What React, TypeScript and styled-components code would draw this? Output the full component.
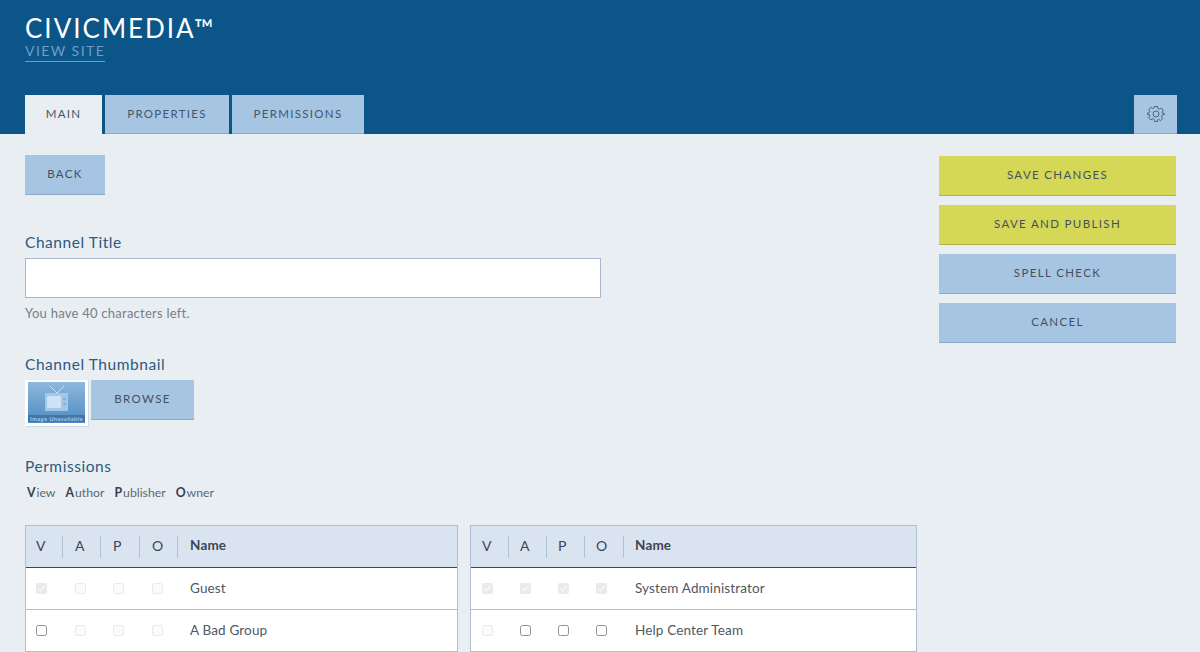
import styled, { createGlobalStyle } from "styled-components";

const GlobalStyle = createGlobalStyle`
    html, body {
        height: 100%;
        margin: 0;
        overflow: hidden;
    }

    body {
        background: #e9eef2;
        font-family: "Lato", "Noto Sans", sans-serif;
        color: #33495c;
    }
`;

type Access = "checked" | "locked" | "lockedChecked" | "open";

type TableData = {
    columns: string;
    lead: number;
    pad: number;
    rows: { name: string; access: Access[] }[];
};

const tables: TableData[] = [
    {
        columns: "37px 38px 39px 38px 1fr",
        lead: 10,
        pad: 12,
        rows: [
            { name: "Guest", access: ["lockedChecked", "locked", "locked", "locked"] },
            { name: "A Bad Group", access: ["open", "locked", "locked", "locked"] },
        ],
    },
    {
        columns: "38px 38px 38px 39px 1fr",
        lead: 11,
        pad: 11,
        rows: [
            {
                name: "System Administrator",
                access: ["lockedChecked", "lockedChecked", "lockedChecked", "lockedChecked"],
            },
            { name: "Help Center Team", access: ["locked", "open", "open", "open"] },
        ],
    },
];

const legend = [
    ["V", "iew"],
    ["A", "uthor"],
    ["P", "ublisher"],
    ["O", "wner"],
];

const GearIcon = () => (
    <svg width="18" height="18" viewBox="0 0 24 24" fill="none" stroke="#4c5f75" strokeWidth="1.3" strokeLinejoin="round">
        <path d="M10 2h4l.6 2.9 1.9.8 2.5-1.6 2.8 2.8-1.6 2.5.8 1.9L23 11v2l-2.9.7-.8 1.9 1.6 2.5-2.8 2.8-2.5-1.6-1.9.8L14 22h-4l-.6-2.9-1.9-.8-2.5 1.6-2.8-2.8 1.6-2.5-.8-1.9L0 13v-2l3-.7.8-1.9-1.6-2.5L5 3.1l2.5 1.6 1.9-.8z" />
        <circle cx="12" cy="12" r="4" />
    </svg>
);

const Unavailable = () => (
    <svg width="57" height="41" viewBox="0 0 57 41">
        <defs>
            <linearGradient id="sky" x1="0" y1="0" x2="0" y2="1">
                <stop offset="0" stopColor="#8fb8de" />
                <stop offset="1" stopColor="#4f8bc2" />
            </linearGradient>
        </defs>
        <rect width="57" height="41" fill="url(#sky)" />
        <path d="M22 4l7 7 7-7" fill="none" stroke="#c9dff2" strokeWidth="1" />
        <rect x="17" y="11" width="23" height="18" rx="1" fill="#a3c7e6" />
        <rect x="19" y="14" width="14" height="12" rx="1" fill="#cfe3f4" />
        <circle cx="36.5" cy="17" r="1.4" fill="#7fb0da" />
        <circle cx="36.5" cy="22" r="1.4" fill="#7fb0da" />
        <rect y="33" width="57" height="7" fill="#3f77ab" />
        <text x="28.5" y="38.8" fontSize="5.8" fontWeight="700" textAnchor="middle" fill="#a9c8e3" fontFamily="Lato, sans-serif" letterSpacing="0.35">
            Image Unavailable
        </text>
    </svg>
);

const App = () => {
    return (
        <>
            <GlobalStyle />
            <Header>
                <div>
                    <Brand>CIVICMEDIA™</Brand>
                    <ViewSite href="#">VIEW SITE</ViewSite>
                </div>
                <TabBar>
                    <Tabs>
                        <Tab $active $width={77}>MAIN</Tab>
                        <Tab $width={124}>PROPERTIES</Tab>
                        <Tab $width={132}>PERMISSIONS</Tab>
                    </Tabs>
                    <SettingsTab aria-label="Settings">
                        <GearIcon />
                    </SettingsTab>
                </TabBar>
            </Header>
            <Main>
                <Form>
                    <Button $width={80}>BACK</Button>
                    <TitleField>
                        <Label>Channel Title</Label>
                        <TextInput type="text" />
                        <Hint>You have 40 characters left.</Hint>
                    </TitleField>
                    <ThumbnailField>
                        <Label>Channel Thumbnail</Label>
                        <ThumbnailRow>
                            <Thumbnail>
                                <Unavailable />
                            </Thumbnail>
                            <Button $width={103}>BROWSE</Button>
                        </ThumbnailRow>
                    </ThumbnailField>
                    <PermissionsField>
                        <Label>Permissions</Label>
                        <Legend>
                            {legend.map(([key, rest]) => (
                                <span key={key}>
                                    <LegendKey>{key}</LegendKey>
                                    {rest}
                                </span>
                            ))}
                        </Legend>
                    </PermissionsField>
                    <Tables>
                        {tables.map(({ columns, lead, pad, rows }) => (
                            <Table key={columns}>
                                <HeadRow $columns={columns} $lead={lead} $pad={pad}>
                                    <HeadCell>V</HeadCell>
                                    <HeadCell>A</HeadCell>
                                    <HeadCell>P</HeadCell>
                                    <HeadCell>O</HeadCell>
                                    <NameHead>Name</NameHead>
                                </HeadRow>
                                {rows.map(({ name, access }) => (
                                    <Row key={name} $columns={columns} $lead={lead} $pad={pad}>
                                        {access.map((state, idx) => (
                                            <Cell key={idx}>
                                                <Check
                                                    type="checkbox"
                                                    disabled={state === "locked" || state === "lockedChecked"}
                                                    defaultChecked={state === "lockedChecked" || state === "checked"}
                                                />
                                            </Cell>
                                        ))}
                                        <NameCell>{name}</NameCell>
                                    </Row>
                                ))}
                            </Table>
                        ))}
                    </Tables>
                </Form>
                <Actions>
                    <Button $accent>SAVE CHANGES</Button>
                    <Button $accent>SAVE AND PUBLISH</Button>
                    <Button>SPELL CHECK</Button>
                    <Button>CANCEL</Button>
                </Actions>
            </Main>
        </>
    );
};

const Header = styled.header`
    display: flex;
    flex-direction: column;
    justify-content: space-between;

    height: 134px;

    padding: 14px 23px 0 25px;

    box-sizing: border-box;
    background: #0b5588;
`;

const Brand = styled.div`
    font-size: 26px;
    line-height: 28px;
    letter-spacing: 2px;
    color: #fff;
`;

const ViewSite = styled.a`
    display: block;

    width: fit-content;

    padding-bottom: 1px;

    font-size: 14px;
    line-height: 18px;
    letter-spacing: 1.45px;
    color: #6f9dc4;
    text-decoration: none;

    border-bottom: 1px solid #6f9dc4;
`;

const TabBar = styled.div`
    display: flex;
    justify-content: space-between;
`;

const Tabs = styled.div`
    display: flex;
    gap: 3px;
`;

const Tab = styled.div<{ $active?: boolean; $width: number }>`
    width: ${({ $width }) => $width}px;
    height: 39px;

    font-size: 11.5px;
    line-height: 38px;
    letter-spacing: 1.3px;
    text-align: center;
    color: #45566b;

    box-sizing: border-box;
    background: ${({ $active }) => ($active ? "#e9eef2" : "#a6c5e3")};
    border-bottom: ${({ $active }) => ($active ? "none" : "1px solid #8ea9c8")};
`;

const SettingsTab = styled.div`
    display: flex;
    align-items: center;
    justify-content: center;

    width: 43px;
    height: 39px;

    box-sizing: border-box;
    background: #a6c5e3;
    border-bottom: 1px solid #8ea9c8;
`;

const Main = styled.main`
    display: flex;
    justify-content: space-between;

    padding: 21px 24px 0 25px;
`;

const Form = styled.div`
    display: flex;
    flex-direction: column;
    align-items: flex-start;

    width: 892px;
`;

const Button = styled.div<{ $accent?: boolean; $width?: number }>`
    flex-shrink: 0;

    width: ${({ $width }) => ($width ? `${$width}px` : "auto")};
    height: 40px;

    font-size: 11.5px;
    line-height: 38px;
    letter-spacing: 1.35px;
    text-align: center;
    color: #45505e;

    box-sizing: border-box;
    background: ${({ $accent }) => ($accent ? "#d5d757" : "#a6c5e3")};
    border-bottom: 1px solid ${({ $accent }) => ($accent ? "#b0b548" : "#8ea9c8")};
`;

const Label = styled.div`
    font-size: 15.5px;
    line-height: 20px;
    letter-spacing: 0.55px;
    color: #2c5a80;
`;

const TitleField = styled.div`
    margin-top: 37px;
`;

const TextInput = styled.input`
    display: block;

    width: 576px;
    height: 40px;

    margin-top: 6px;

    box-sizing: border-box;
    background: #fff;
    border: 1px solid #a8b8cc;
    border-radius: 0;
    outline: none;
`;

const Hint = styled.div`
    margin-top: 7px;

    font-size: 13px;
    line-height: 17px;
    letter-spacing: 0.25px;
    color: #76808a;
`;

const ThumbnailField = styled.div`
    margin-top: 32px;
`;

const ThumbnailRow = styled.div`
    display: flex;
    align-items: flex-start;
    gap: 3px;

    margin-top: 6px;
`;

const Thumbnail = styled.div`
    display: flex;

    padding: 2px 3px 3px 3px;

    background: #fff;
    box-shadow: 1px 1px 0 #cdd9e4;
`;

const PermissionsField = styled.div`
    margin-top: 30px;
`;

const Legend = styled.div`
    display: flex;
    gap: 10px;

    margin-top: 9px;
    margin-left: 2px;

    font-size: 12.25px;
    line-height: 16px;
    color: #5d6873;
`;

const LegendKey = styled.b`
    margin-right: 1px;

    color: #33404d;
`;

const Tables = styled.div`
    display: grid;
    grid-template-columns: 433px 447px;
    gap: 12px;

    margin-top: 24px;
`;

const Table = styled.div`
    background: #fff;
    border: 1px solid #aebfd3;
    border-bottom: none;
`;

const Row = styled.div<{ $columns: string; $lead: number; $pad: number }>`
    display: grid;
    grid-template-columns: ${({ $columns }) => $columns};
    align-items: center;

    height: 42px;

    box-sizing: border-box;
    border-bottom: 1px solid #aebfd3;

    font-size: 13.5px;
    letter-spacing: 0.15px;
    color: #4e5863;

    & > div {
        padding-left: ${({ $pad }) => $pad}px;
    }

    & > div:first-child {
        padding-left: ${({ $lead }) => $lead}px;
    }
`;

const HeadRow = styled(Row)`
    background: #dae3f0;
    border-bottom-color: #0b5588;
`;

const HeadCell = styled.div`
    height: 22px;

    font-size: 14px;
    line-height: 20px;
    color: #3d4650;

    box-sizing: border-box;
    border-right: 1px solid #b0c1d4;
`;

const NameHead = styled.div`
    padding-bottom: 3px;

    font-size: 13.5px;
    font-weight: 700;
    color: #3d4650;
`;

const Cell = styled.div`
    display: flex;
    align-items: center;
`;

const NameCell = styled(Cell)`
    padding-bottom: 2px;
`;

const Check = styled.input`
    width: 11px;
    height: 11px;

    margin: 0;
    opacity: 0.8;

    &:disabled {
        opacity: 0.45;
    }
`;

const Actions = styled.div`
    display: flex;
    flex-direction: column;
    gap: 9px;

    width: 237px;

    margin-top: 1px;
`;

export default App;
